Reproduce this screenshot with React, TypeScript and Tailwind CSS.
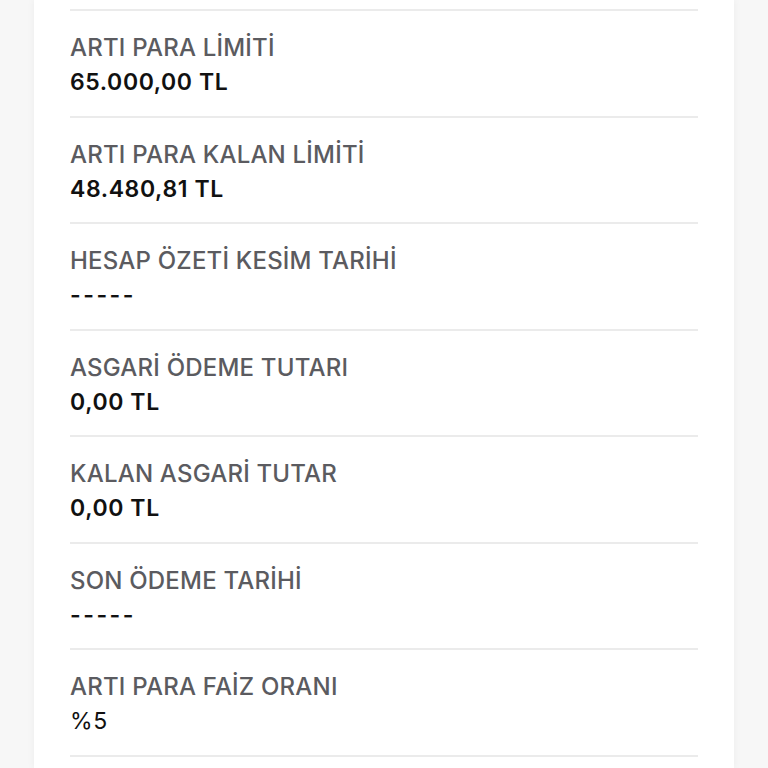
const rows: Array<{ label: string; value: string }> = [
  { label: "ARTI PARA LİMİTİ", value: "65.000,00 TL" },
  { label: "ARTI PARA KALAN LİMİTİ", value: "48.480,81 TL" },
  { label: "HESAP ÖZETİ KESİM TARİHİ", value: "-----" },
  { label: "ASGARİ ÖDEME TUTARI", value: "0,00 TL" },
  { label: "KALAN ASGARİ TUTAR", value: "0,00 TL" },
  { label: "SON ÖDEME TARİHİ", value: "-----" },
  { label: "ARTI PARA FAİZ ORANI", value: "%5" },
];

function valueClass(v: string) {
  if (v === "-----")
    return "mt-[2px] text-[23px] leading-[32px] font-semibold text-[#111] tracking-[2.5px]";
  if (v.startsWith("%"))
    return "mt-[2px] text-[23px] leading-[32px] font-normal text-[#111] tracking-[0.6px]";
  return "mt-[2px] text-[23px] leading-[32px] font-semibold text-[#111] tracking-[0.6px]";
}

export default function App() {
  return (
    <div
      className="w-[768px] h-[768px] overflow-hidden bg-[#f7f7f7]"
      style={{ fontFamily: "Inter, 'Open Sans', sans-serif" }}
    >
      <div className="mx-[34px] h-full bg-white shadow-[0_0_8px_rgba(0,0,0,0.05)] px-9">
        {/* row cut off at the top */}
        <div className="h-[11px] border-b-2 border-[#ebebeb]" />
        {rows.map((r) => (
          <div
            key={r.label}
            className="h-[106.5px] border-b-2 border-[#ebebeb] pt-[21px]"
          >
            <div className="text-[24px] leading-[32px] font-medium text-[#5b5b60] tracking-[0.2px]">
              {r.label}
            </div>
            <div className={valueClass(r.value)}>{r.value}</div>
          </div>
        ))}
      </div>
    </div>
  );
}
